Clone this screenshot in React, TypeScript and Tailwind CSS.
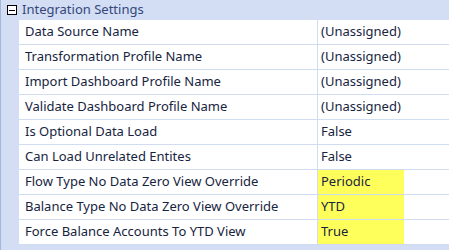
const rows: { label: string; value: string; hi?: boolean }[] = [
  { label: "Data Source Name", value: "(Unassigned)" },
  { label: "Transformation Profile Name", value: "(Unassigned)" },
  { label: "Import Dashboard Profile Name", value: "(Unassigned)" },
  { label: "Validate Dashboard Profile Name", value: "(Unassigned)" },
  { label: "Is Optional Data Load", value: "False" },
  { label: "Can Load Unrelated Entites", value: "False" },
  { label: "Flow Type No Data Zero View Override", value: "Periodic", hi: true },
  { label: "Balance Type No Data Zero View Override", value: "YTD", hi: true },
  { label: "Force Balance Accounts To YTD View", value: "True", hi: true },
];

export default function App() {
  return (
    <div
      className="w-[449px] h-[250px] overflow-hidden bg-[#d3def4] border-l border-[#a3b6dc] text-[13px] text-[#17243f]"
      style={{ fontFamily: '"Noto Sans", "Liberation Sans", sans-serif' }}
    >
      <div className="h-[20px] flex items-center">
        <div className="ml-[6px] w-[10px] h-[10px] border border-black bg-white flex items-center justify-center">
          <div className="w-[6px] h-px bg-black" />
        </div>
        <span className="ml-[5px] text-[#34477a]">Integration Settings</span>
      </div>
      <div className="ml-[18px]">
        {rows.map((r) => (
          <div key={r.label} className="flex h-[25px] bg-white border-b border-[#d0dcf0]">
            <div className="w-[299px] pl-[6px] flex items-center border-r border-[#d0dcf0]">
              {r.label}
            </div>
            <div className="flex-1 flex items-center">
              <div className={`w-[86px] h-full flex items-center pl-[3px] ${r.hi ? "bg-[#ffff5c]" : ""}`}>
                {r.value}
              </div>
            </div>
          </div>
        ))}
      </div>
    </div>
  );
}
